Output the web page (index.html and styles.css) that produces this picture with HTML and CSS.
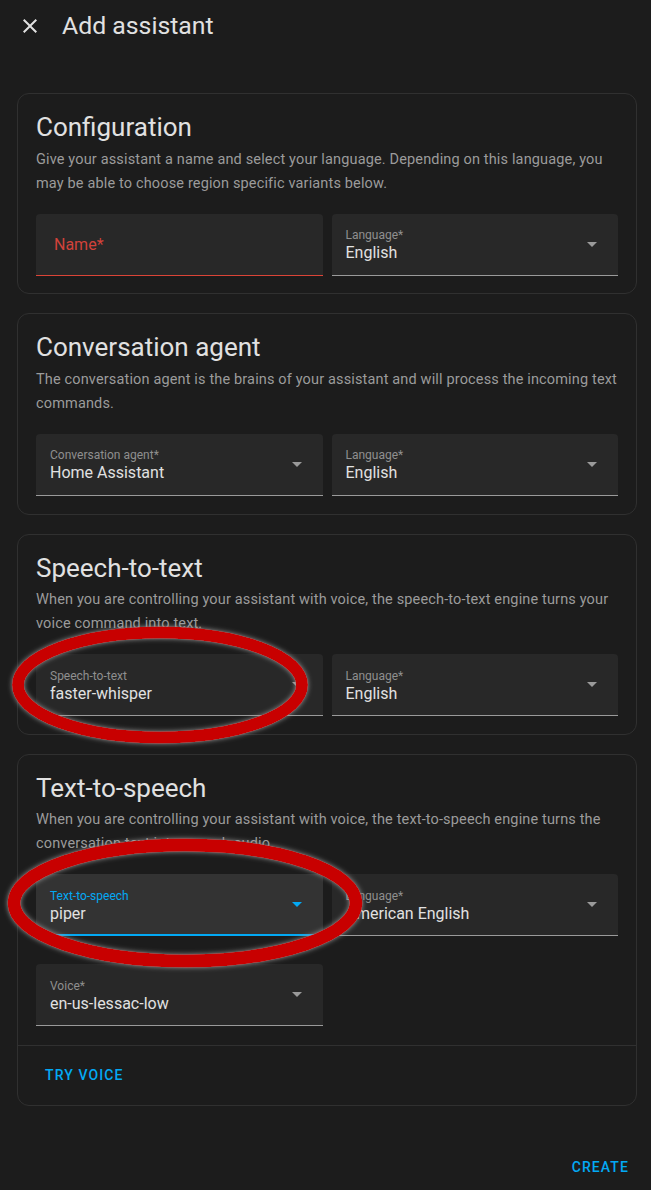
FILE: index.html
```html
<!DOCTYPE html>
<html lang="en">
<head>
<meta charset="utf-8">
<title>Add assistant</title>
<link rel="stylesheet" href="styles.css">
</head>
<body>
<div class="page">
  <header class="topbar">
    <button class="icon-btn" aria-label="Close">
      <svg viewBox="0 0 24 24" width="24" height="24"><path fill="currentColor" d="M19,6.41L17.59,5L12,10.59L6.41,5L5,6.41L10.59,12L5,17.59L6.41,19L12,13.41L17.59,19L19,17.59L13.41,12L19,6.41Z"/></svg>
    </button>
    <h1 class="title">Add assistant</h1>
  </header>

  <main class="content">
    <section class="card">
      <div class="card-body">
        <h2 class="card-title">Configuration</h2>
        <p class="desc">Give your assistant a name and select your language. Depending on this language, you may be able to choose region specific variants below.</p>
        <div class="row">
          <div class="field field-error"><span class="placeholder">Name*</span></div>
          <div class="field">
            <div class="fv"><span class="lbl">Language*</span><span class="val">English</span></div>
            <svg class="arrow" viewBox="7 10 10 5" width="10" height="5"><polygon points="7 10 12 15 17 10" fill="currentColor"/></svg>
          </div>
        </div>
      </div>
    </section>

    <section class="card">
      <div class="card-body">
        <h2 class="card-title">Conversation agent</h2>
        <p class="desc">The conversation agent is the brains of your assistant and will process the incoming text commands.</p>
        <div class="row">
          <div class="field">
            <div class="fv"><span class="lbl">Conversation agent*</span><span class="val">Home Assistant</span></div>
            <svg class="arrow" viewBox="7 10 10 5" width="10" height="5"><polygon points="7 10 12 15 17 10" fill="currentColor"/></svg>
          </div>
          <div class="field">
            <div class="fv"><span class="lbl">Language*</span><span class="val">English</span></div>
            <svg class="arrow" viewBox="7 10 10 5" width="10" height="5"><polygon points="7 10 12 15 17 10" fill="currentColor"/></svg>
          </div>
        </div>
      </div>
    </section>

    <section class="card">
      <div class="card-body">
        <h2 class="card-title">Speech-to-text</h2>
        <p class="desc">When you are controlling your assistant with voice, the speech-to-text engine turns your voice command into text.</p>
        <div class="row">
          <div class="field">
            <div class="fv"><span class="lbl">Speech-to-text</span><span class="val">faster-whisper</span></div>
            <svg class="arrow" viewBox="7 10 10 5" width="10" height="5"><polygon points="7 10 12 15 17 10" fill="currentColor"/></svg>
          </div>
          <div class="field">
            <div class="fv"><span class="lbl">Language*</span><span class="val">English</span></div>
            <svg class="arrow" viewBox="7 10 10 5" width="10" height="5"><polygon points="7 10 12 15 17 10" fill="currentColor"/></svg>
          </div>
        </div>
      </div>
    </section>

    <section class="card">
      <div class="card-body card-body-actions">
        <h2 class="card-title">Text-to-speech</h2>
        <p class="desc">When you are controlling your assistant with voice, the text-to-speech engine turns the conversation text into speech audio.</p>
        <div class="row">
          <div class="field field-focused">
            <div class="fv"><span class="lbl">Text-to-speech</span><span class="val">piper</span></div>
            <svg class="arrow" viewBox="7 10 10 5" width="10" height="5"><polygon points="7 10 12 15 17 10" fill="currentColor"/></svg>
          </div>
          <div class="field">
            <div class="fv"><span class="lbl">Language*</span><span class="val">American English</span></div>
            <svg class="arrow" viewBox="7 10 10 5" width="10" height="5"><polygon points="7 10 12 15 17 10" fill="currentColor"/></svg>
          </div>
        </div>
        <div class="row row-second">
          <div class="field">
            <div class="fv"><span class="lbl">Voice*</span><span class="val">en-us-lessac-low</span></div>
            <svg class="arrow" viewBox="7 10 10 5" width="10" height="5"><polygon points="7 10 12 15 17 10" fill="currentColor"/></svg>
          </div>
        </div>
      </div>
      <div class="card-actions">
        <button class="text-btn">Try voice</button>
      </div>
    </section>
  </main>

  <footer class="dialog-actions">
    <button class="text-btn">Create</button>
  </footer>

  <svg class="annotations" width="651" height="1190" viewBox="0 0 651 1190" aria-hidden="true">
    <defs>
      <filter id="glow" x="-20%" y="-40%" width="140%" height="180%">
        <feGaussianBlur in="SourceAlpha" stdDeviation="2.5" result="b"/>
        <feFlood flood-color="#a0a0a0" flood-opacity="0.9"/>
        <feComposite in2="b" operator="in" result="s"/>
        <feMerge><feMergeNode in="s"/><feMergeNode in="SourceGraphic"/></feMerge>
      </filter>
    </defs>
    <ellipse cx="160" cy="685" rx="142" ry="52.5" fill="none" stroke="#c80000" stroke-width="12" filter="url(#glow)"/>
    <ellipse cx="185" cy="903" rx="171" ry="58" fill="none" stroke="#c80000" stroke-width="13" filter="url(#glow)"/>
  </svg>
</div>
</body>
</html>
```
FILE: styles.css
```css
* { box-sizing: border-box; }

html, body {
  margin: 0;
  padding: 0;
  background: #1c1c1c;
}

body {
  font-family: Roboto, "Liberation Sans", sans-serif;
  color: #e1e1e1;
  -webkit-font-smoothing: antialiased;
}

.page {
  position: relative;
  width: 651px;
  min-height: 1190px;
}

.topbar {
  height: 52px;
  display: flex;
  align-items: center;
}

.icon-btn {
  background: none;
  border: 0;
  padding: 0;
  margin: 0 0 0 18px;
  width: 24px;
  height: 24px;
  color: #e1e1e1;
  display: flex;
}

.title {
  margin: 0 0 0 20px;
  font-size: 24.8px;
  font-weight: 400;
  line-height: 28px;
  color: #e1e1e1;
}

.content {
  padding: 41px 14px 0 17px;
  display: flex;
  flex-direction: column;
  gap: 19px;
}

.card {
  border: 1px solid #303030;
  border-radius: 12px;
  background: #1c1c1c;
}

.card-body {
  padding: 17px 18px 17.8px 18px;
}

.card-body-actions {
  padding-bottom: 18.8px;
}

.card-title {
  margin: 0;
  font-size: 26px;
  font-weight: 400;
  line-height: 32px;
  color: #e1e1e1;
}

.desc {
  margin: 4.5px 0 0;
  font-size: 14.5px;
  line-height: 24px;
  color: #9b9b9b;
  letter-spacing: 0.15px;
}

.row {
  margin-top: 18px;
  display: grid;
  grid-template-columns: 1fr 1fr;
  gap: 9px;
}

.row-second {
  margin-top: 28px;
}

.field {
  height: 62px;
  display: flex;
  align-items: flex-start;
  justify-content: space-between;
  background: #282828;
  border-radius: 4px 4px 0 0;
  border-bottom: 1px solid #9a9a9a;
  padding: 13.5px 21px 0 14px;
}

.fv {
  display: flex;
  flex-direction: column;
}

.lbl {
  font-size: 12px;
  line-height: 16px;
  color: #8f8f8f;
}

.val {
  font-size: 16px;
  line-height: 20px;
  color: #e1e1e1;
}

.arrow {
  align-self: center;
  color: #9a9a9a;
  margin-top: -13.5px;
}

.field-error {
  align-items: center;
  padding: 0 18px;
  border-bottom-color: #db4437;
}

.placeholder {
  font-size: 16px;
  color: #d2423a;
}

.field-focused {
  background: #333333;
  border-bottom: 2px solid #03a9f4;
}

.field-focused .lbl,
.field-focused .arrow {
  color: #03a9f4;
}

.card-actions {
  border-top: 1px solid #303030;
  height: 59.5px;
  display: flex;
  align-items: center;
  padding: 0 19px;
}

.text-btn {
  background: none;
  border: 0;
  height: 36px;
  padding: 0 8px;
  font-family: Roboto, "Liberation Sans", sans-serif;
  font-size: 14px;
  font-weight: 500;
  letter-spacing: 1.1px;
  text-transform: uppercase;
  color: #03a9f4;
}

.dialog-actions {
  display: flex;
  justify-content: flex-end;
  padding: 43.5px 14px 0;
}

.annotations {
  position: absolute;
  left: 0;
  top: 0;
  pointer-events: none;
}
```
